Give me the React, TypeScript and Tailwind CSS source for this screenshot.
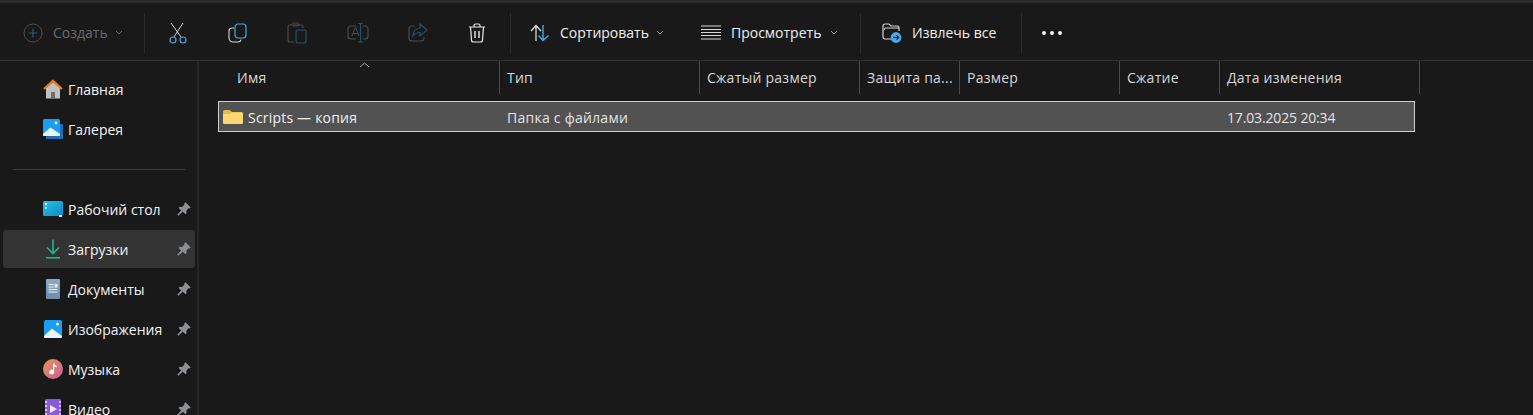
import React from "react";

const font = { fontFamily: '"Open Sans", "Noto Sans", sans-serif' };

function Sep() {
  return <div className="w-px h-[40px] bg-[#2c2c2c] shrink-0" />;
}

function Chevron({ color = "#a0a0a0" }: { color?: string }) {
  return (
    <svg width="8" height="5" viewBox="0 0 8 5" fill="none" className="shrink-0">
      <path d="M1 1l3 3 3-3" stroke={color} strokeWidth="1" />
    </svg>
  );
}

const Plus = () => (
  <svg width="20" height="20" viewBox="0 0 20 20" fill="none">
    <circle cx="10" cy="10" r="9" stroke="#4b4b4b" strokeWidth="1" />
    <path d="M10 5.5v9M5.5 10h9" stroke="#2b5a78" strokeWidth="1.2" />
  </svg>
);
const Cut = () => (
  <svg width="20" height="22" viewBox="0 0 20 22" fill="none">
    <path d="M3 1l10 14M15 1L6 15" stroke="#d6d6d6" strokeWidth="1" />
    <circle cx="5" cy="18" r="3" stroke="#4aa8de" strokeWidth="1.2" />
    <circle cx="15" cy="18" r="3" stroke="#4aa8de" strokeWidth="1.2" />
  </svg>
);
const Copy = () => (
  <svg width="20" height="20" viewBox="0 0 20 20" fill="none">
    <rect x="7" y="1" width="11" height="14" rx="3" stroke="#4aa8de" strokeWidth="1.2" />
    <path d="M6 5H4a3 3 0 0 0-3 3v7a4 4 0 0 0 4 4h5a3 3 0 0 0 3-2.5" stroke="#d6d6d6" strokeWidth="1.1" />
  </svg>
);
const Paste = () => (
  <svg width="20" height="22" viewBox="0 0 20 22" fill="none">
    <path d="M7 20H3a2 2 0 0 1-2-2V5a2 2 0 0 1 2-2h11a2 2 0 0 1 2 2v1" stroke="#4d4d4d" strokeWidth="1.1" />
    <rect x="5" y="1" width="7" height="3" rx="1.5" stroke="#4d4d4d" strokeWidth="1" />
    <rect x="9" y="8" width="10" height="13" rx="2" stroke="#27506b" strokeWidth="1.2" />
  </svg>
);
const Rename = () => (
  <svg width="22" height="20" viewBox="0 0 22 20" fill="none">
    <path d="M9 3H4a3 3 0 0 0-3 3v7a3 3 0 0 0 3 3h5M16 3h2a3 3 0 0 1 3 3v7a3 3 0 0 1-3 3h-2" stroke="#4d4d4d" strokeWidth="1.1" />
    <path d="M5 13l3-8h1l3 8M6 10.5h5" stroke="#4d4d4d" strokeWidth="1" />
    <path d="M11 0.5h5M13.5 0.5v18.5M11 19h5" stroke="#27506b" strokeWidth="1.2" />
  </svg>
);
const Share = () => (
  <svg width="20" height="20" viewBox="0 0 20 20" fill="none">
    <path d="M7 3H4a3 3 0 0 0-3 3v9a3 3 0 0 0 3 3h9a3 3 0 0 0 3-3v-1" stroke="#4d4d4d" strokeWidth="1.1" />
    <path d="M12 1l7 6-7 6V9.5c-3 0-5 1-7 3.5 0-5 3-7.5 7-8V1z" stroke="#27506b" strokeWidth="1.2" />
  </svg>
);
const Trash = () => (
  <svg width="18" height="20" viewBox="0 0 18 20" fill="none">
    <path d="M1 4h16M6 4V2.5A1.5 1.5 0 0 1 7.5 1h3A1.5 1.5 0 0 1 12 2.5V4" stroke="#e8e8e8" strokeWidth="1.2" />
    <path d="M2.5 4l1 13a2 2 0 0 0 2 2h7a2 2 0 0 0 2-2l1-13" stroke="#e8e8e8" strokeWidth="1.2" />
    <path d="M7 8v7M11 8v7" stroke="#e8e8e8" strokeWidth="1.4" />
  </svg>
);
const Sort = () => (
  <svg width="20" height="18" viewBox="0 0 20 18" fill="none">
    <path d="M1 7l5-5.500L11 7M6 2v15" stroke="#e4e4e4" strokeWidth="1.2" />
    <path d="M13 1v15M8.500 11.500l4.500 5 5.500-5" stroke="#4aa8de" strokeWidth="1.4" />
  </svg>
);
const Lines = () => (
  <svg width="20" height="15" viewBox="0 0 20 15" fill="none">
    <path d="M0 1h20M0 4.500h20M0 7.500h20M0 10.500h20M0 14h20" stroke="#d8d8d8" strokeWidth="1.1" />
  </svg>
);
const Extract = () => (
  <svg width="20" height="20" viewBox="0 0 20 20" fill="none">
    <path d="M9 16H3a2 2 0 0 1-2-2V3a2 2 0 0 1 2-2h4l2 2h6a2 2 0 0 1 2 2v3" stroke="#d4d4d4" strokeWidth="1.2" />
    <path d="M2 7l1-2h14" stroke="#d4d4d4" strokeWidth="1" />
    <circle cx="14" cy="14.500" r="5.400" fill="#4aa8e8" />
    <path d="M11 14.500h5.500M14.500 12.300l2.200 2.200-2.200 2.200" stroke="#10202c" strokeWidth="1.2" />
  </svg>
);

const Home = () => (
  <svg width="20" height="20" viewBox="0 0 20 20">
    <path d="M3 9l7-6 7 6v10.500H3z" fill="#c0c0c0" />
    <path d="M8 19.500v-6.500h4v6.500z" fill="#6e6e6e" />
    <path d="M1 10L10 1.800l9 8.200" stroke="#ec7a1c" strokeWidth="2.200" fill="none" />
  </svg>
);
const Gallery = () => (
  <svg width="20" height="20" viewBox="0 0 20 20">
    <rect x="3" y="5" width="17" height="15" rx="1" fill="#1f6fb5" />
    <rect x="0" y="0" width="17" height="17" rx="1.500" fill="#1b9df0" />
    <path d="M0 15l7.500-6.500L17 15v1a1 1 0 0 1-1 1H1a1 1 0 0 1-1-1z" fill="#e8f5fd" />
    <circle cx="13" cy="4" r="1.400" fill="#e8f5fd" />
  </svg>
);
const Desktop = () => (
  <svg width="20" height="16" viewBox="0 0 20 16">
    <defs>
      <linearGradient id="dg" x1="0" y1="0" x2="1" y2="1">
        <stop offset="0" stopColor="#28c4e8" />
        <stop offset="1" stopColor="#0f86c6" />
      </linearGradient>
    </defs>
    <rect width="20" height="15" rx="1.500" fill="url(#dg)" />
    <rect x="2" y="2" width="2" height="2" fill="#e8f8fc" />
    <rect x="2" y="6" width="2" height="1.500" fill="#e8f8fc" />
    <rect x="16" y="14" width="3" height="2" fill="#d0e8f0" />
  </svg>
);
const Download = () => (
  <svg width="16" height="20" viewBox="0 0 16 20" fill="none">
    <path d="M8 0.500v14M2 8.500l6 6 6-6" stroke="#1fb58f" strokeWidth="1.600" />
    <path d="M1 18.800h14" stroke="#1fb58f" strokeWidth="1.600" />
  </svg>
);
const Docs = () => (
  <svg width="15" height="20" viewBox="0 0 15 20">
    <defs>
      <linearGradient id="dc" x1="0" y1="0" x2="0" y2="1">
        <stop offset="0" stopColor="#8faac4" />
        <stop offset="1" stopColor="#6d8cab" />
      </linearGradient>
    </defs>
    <rect width="14" height="20" rx="1" fill="url(#dc)" />
    <path d="M2.500 5h5v1h-5zM2.500 7.500h5v1h-5zM2.500 10h9v1h-9zM2.500 12.500h9v1h-9zM8.500 5h3v3.500h-3z" fill="#eef3f8" />
  </svg>
);
const Pics = () => (
  <svg width="18" height="18" viewBox="0 0 18 18">
    <rect width="18" height="18" rx="1.500" fill="#1b9df0" />
    <path d="M0 16l8-7.500L18 16v1a1 1 0 0 1-1 1H1a1 1 0 0 1-1-1z" fill="#e8f5fd" />
    <circle cx="13.500" cy="4" r="1.500" fill="#e8f5fd" />
  </svg>
);
const Music = () => (
  <svg width="20" height="20" viewBox="0 0 20 20">
    <defs>
      <linearGradient id="mg" x1="0" y1="0" x2="1" y2="1">
        <stop offset="0" stopColor="#e8925a" />
        <stop offset="1" stopColor="#c9619a" />
      </linearGradient>
    </defs>
    <circle cx="10" cy="10" r="10" fill="url(#mg)" />
    <path d="M10 4.500h1.200c.3 1.500 1.200 2 2.500 2.200v1.600c-1 0-1.800-.3-2.500-.8V13a2.400 2.400 0 1 1-1.200-2.100z" fill="#fff" />
  </svg>
);
const Video = () => (
  <svg width="16" height="20" viewBox="0 0 16 20">
    <rect width="16" height="20" rx="1.500" fill="#8a5bd8" />
    <path d="M0 2h2v2H0zM0 6h2v2H0zM0 10h2v2H0zM0 14h2v2H0zM14 2h2v2h-2zM14 6h2v2h-2zM14 10h2v2h-2zM14 14h2v2h-2z" fill="#d9c4f5" />
    <path d="M5 6l7 4-7 4z" fill="#f0e6fd" />
  </svg>
);
const Pin = () => (
  <svg width="14" height="14" viewBox="0 0 14 14" className="shrink-0">
    <path d="M8.500 0.300l5.200 5.200-1 1-1-.2-2.300 2.300.1 2.500-1.100 1.100-2.500-2.500L1.200 13.700l-.9-.9 3.800-4.400-2.500-2.500 1.100-1.100 2.500.1L7.500 2.600l-.2-1z" fill="#8c9094" />
  </svg>
);
const Folder = () => (
  <svg width="20" height="14" viewBox="0 0 20 14">
    <path d="M0 1.500A1.500 1.500 0 0 1 1.500 0h5L9 2h9.500A1.500 1.500 0 0 1 20 3.500V12.500a1.500 1.500 0 0 1-1.500 1.500h-17A1.500 1.500 0 0 1 0 12.500z" fill="#e8b93c" />
    <path d="M0 4l7-.2L9 2.500h9.500A1.500 1.500 0 0 1 20 4V12.500a1.500 1.500 0 0 1-1.500 1.500h-17A1.500 1.500 0 0 1 0 12.500z" fill="#fbd872" />
  </svg>
);

function NavItem({ icon, label, pin, selected }: { icon: React.ReactNode; label: string; pin?: boolean; selected?: boolean }) {
  return (
    <div className={`flex items-center ml-[3px] mr-[2px] rounded-[3px] pl-[40px] pr-[4px] ${selected ? "h-[38px] my-[1px] bg-[#333333]" : "h-[40px]"}`}>
      <div className="w-[20px] flex justify-center shrink-0">{icon}</div>
      <span className="ml-[5px] flex-1 text-[14px] text-[#f4f4f4] whitespace-nowrap">{label}</span>
      {pin && <Pin />}
    </div>
  );
}

const columns: [string, string][] = [
  ["Имя", "w-[282px] pl-[19px]"],
  ["Тип", "w-[200px] pl-[7px]"],
  ["Сжатый размер", "w-[160px] pl-[7px]"],
  ["Защита па...", "w-[100px] pl-[7px]"],
  ["Размер", "w-[160px] pl-[7px]"],
  ["Сжатие", "w-[100px] pl-[7px]"],
  ["Дата изменения", "w-[200px] pl-[7px]"],
];

export default function App() {
  return (
    <div style={font} className="w-[1533px] h-[415px] bg-[#191919] overflow-hidden flex flex-col text-[#dcdcdc]">
      <div className="h-[3px] bg-[#2b2b2b] shrink-0" />
      <div className="h-[58px] shrink-0 flex items-center pt-[2px] border-b border-[#333333]">
        <div className="w-[144px] shrink-0 flex items-center pl-[23px]">
          <Plus />
          <span className="ml-[10px] text-[14px] text-[#6a6a6a]">Создать</span>
          <span className="ml-[7px]"><Chevron color="#6a6a6a" /></span>
        </div>
        <Sep />
        <div className="w-[365px] shrink-0 flex items-center justify-between pl-[23px] pr-[24px]">
          <Cut />
          <Copy />
          <Paste />
          <Rename />
          <Share />
          <Trash />
        </div>
        <Sep />
        <div className="w-[349px] shrink-0 flex items-center pl-[19px]">
          <Sort />
          <span className="ml-[10px] text-[14px] text-[#f0f0f0]">Сортировать</span>
          <span className="ml-[7px]"><Chevron /></span>
          <span className="ml-[37px]"><Lines /></span>
          <span className="ml-[10px] text-[14px] text-[#f0f0f0]">Просмотреть</span>
          <span className="ml-[9px]"><Chevron /></span>
        </div>
        <Sep />
        <div className="w-[160px] shrink-0 flex items-center pl-[21px]">
          <Extract />
          <span className="ml-[10px] text-[14px] text-[#f0f0f0]">Извлечь все</span>
        </div>
        <Sep />
        <div className="flex items-center gap-[4px] pl-[20px]">
          <div className="w-[4px] h-[4px] rounded-full bg-[#f4f4f4]" />
          <div className="w-[4px] h-[4px] rounded-full bg-[#f4f4f4]" />
          <div className="w-[4px] h-[4px] rounded-full bg-[#f4f4f4]" />
        </div>
      </div>
      <div className="flex-1 flex min-h-0">
        <div className="w-[197px] shrink-0 pt-[8px] border-r-[2px] border-[#262626] box-content overflow-hidden">
          <NavItem icon={<Home />} label="Главная" />
          <NavItem icon={<Gallery />} label="Галерея" />
          <div className="h-[40px] flex items-center pl-[13px] pr-[12px]">
            <div className="h-px w-full bg-[#3a3a3a]" />
          </div>
          <NavItem icon={<Desktop />} label="Рабочий стол" pin />
          <NavItem icon={<Download />} label="Загрузки" pin selected />
          <NavItem icon={<Docs />} label="Документы" pin />
          <NavItem icon={<Pics />} label="Изображения" pin />
          <NavItem icon={<Music />} label="Музыка" pin />
          <NavItem icon={<Video />} label="Видео" pin />
        </div>
        <div className="flex-1 min-w-0 pl-[19px]">
          <div className="relative flex h-[33px]">
            {columns.map(([label, cls]) => (
              <div key={label} className={`${cls} shrink-0 border-r border-[#4a4a4a] flex items-center text-[14px] tracking-[0.25px] text-[#d8d8d8] whitespace-nowrap`}>
                {label}
              </div>
            ))}
            <svg width="11" height="6" viewBox="0 0 11 6" fill="none" className="absolute left-[141px] top-[1px]">
              <path d="M1 5l4.500-4L10 5" stroke="#a8a8a8" strokeWidth="1" />
            </svg>
          </div>
          <div className="mt-[7px] w-[1197px] h-[31px] pt-[1px] bg-[#525252] border border-[#d0d0d0] flex items-center text-[14px] text-[#e4e4e4] whitespace-nowrap">
            <div className="w-[281px] shrink-0 flex items-center pl-[4px]">
              <span className="-mt-[1px]"><Folder /></span>
              <span className="ml-[5px] tracking-[0.2px] text-[#f0f0f0]">Scripts — копия</span>
            </div>
            <div className="w-[720px] shrink-0 pl-[7px] tracking-[0.25px]">Папка с файлами</div>
            <div className="pl-[7px] tracking-[-0.15px]">17.03.2025 20:34</div>
          </div>
        </div>
      </div>
    </div>
  );
}
